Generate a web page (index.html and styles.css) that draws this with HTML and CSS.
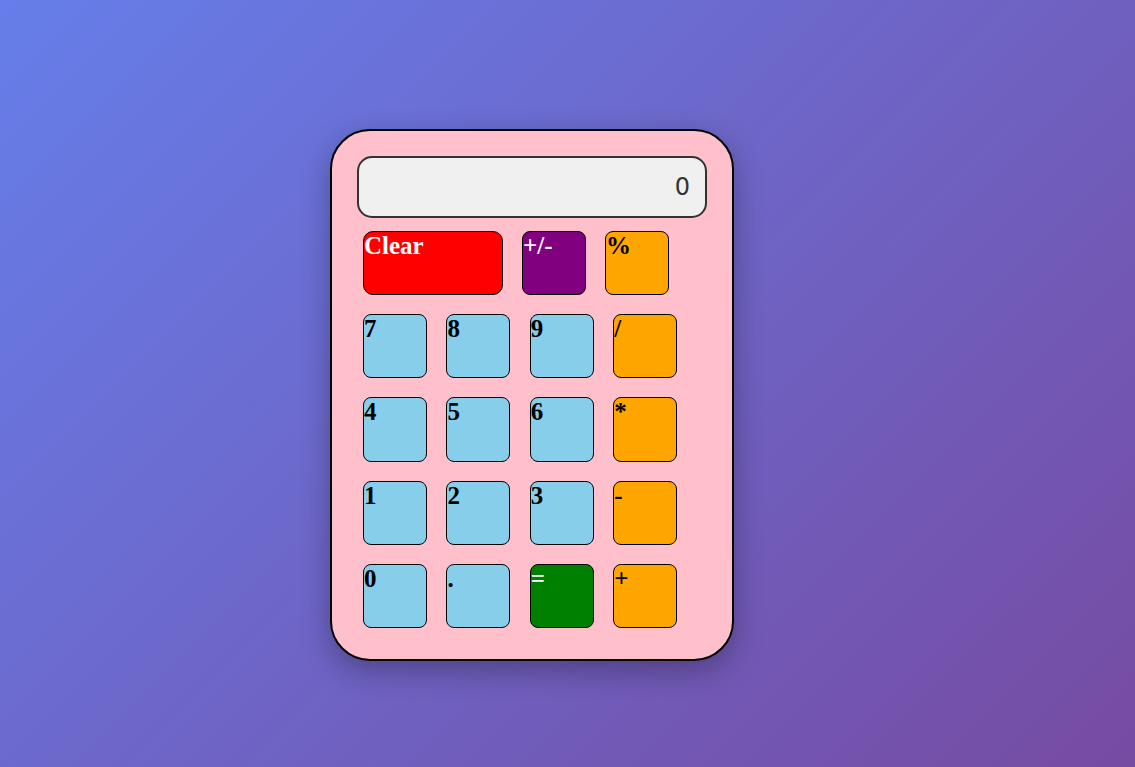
FILE: index.html
```html
<!DOCTYPE html>
<html>
<head>
<meta charset="utf-8">
<title>Calculator</title>
<link rel="stylesheet" href="styles.css">
</head>
<body>
<div class="calc">
  <div class="display">0</div>
  <div class="top-row">
    <div class="key clear">Clear</div>
    <div class="key sign">+/-</div>
    <div class="key op">%</div>
  </div>
  <div class="keys">
    <div class="key num">7</div>
    <div class="key num">8</div>
    <div class="key num">9</div>
    <div class="key op">/</div>
    <div class="key num">4</div>
    <div class="key num">5</div>
    <div class="key num">6</div>
    <div class="key op">*</div>
    <div class="key num">1</div>
    <div class="key num">2</div>
    <div class="key num">3</div>
    <div class="key op">-</div>
    <div class="key num">0</div>
    <div class="key num">.</div>
    <div class="key equals">=</div>
    <div class="key op">+</div>
  </div>
</div>
</body>
</html>
```
FILE: styles.css
```css
html, body {
  margin: 0;
  padding: 0;
}
body {
  min-height: 100vh;
  background: linear-gradient(135deg, #667eea 0%, #764ba2 100%);
  display: flex;
  align-items: flex-start;
  overflow: hidden;
}
.calc {
  margin: 129px 0 0 330px;
  width: 350px;
  padding: 25px 25px 31px;
  border: 2px solid #000;
  border-radius: 40px;
  background: #ffc0cb;
  box-shadow: 0 10px 30px rgba(0, 0, 0, 0.3);
}
.display {
  height: 58px;
  line-height: 58px;
  border: 2px solid #333;
  border-radius: 15px;
  background: #f0f0f0;
  color: #333;
  font-family: "DejaVu Sans", Verdana, sans-serif;
  font-size: 24px;
  text-align: right;
  padding: 0 15px;
}
.top-row {
  display: flex;
  gap: 19px;
  margin: 12.5px 0 0 6px;
}
.keys {
  display: grid;
  grid-template-columns: repeat(4, 64px);
  grid-auto-rows: 64.4px;
  column-gap: 19.4px;
  row-gap: 19px;
  margin: 19px 0 0 6px;
}
.key {
  box-sizing: border-box;
  width: 64px;
  height: 64.4px;
  border: 1px solid #000;
  border-radius: 8px;
  font-family: "Liberation Serif", "Times New Roman", serif;
  font-weight: bold;
  font-size: 25px;
  line-height: 27px;
  color: #000;
  cursor: pointer;
}
.num { background: #87ceeb; }
.op { background: #ffa500; }
.clear {
  width: 140px;
  background: #ff0000;
  color: #fff;
  border-radius: 10px;
}
.sign {
  background: #800080;
  color: #fff;
}
.equals {
  background: #008000;
  color: #fff;
}
```
